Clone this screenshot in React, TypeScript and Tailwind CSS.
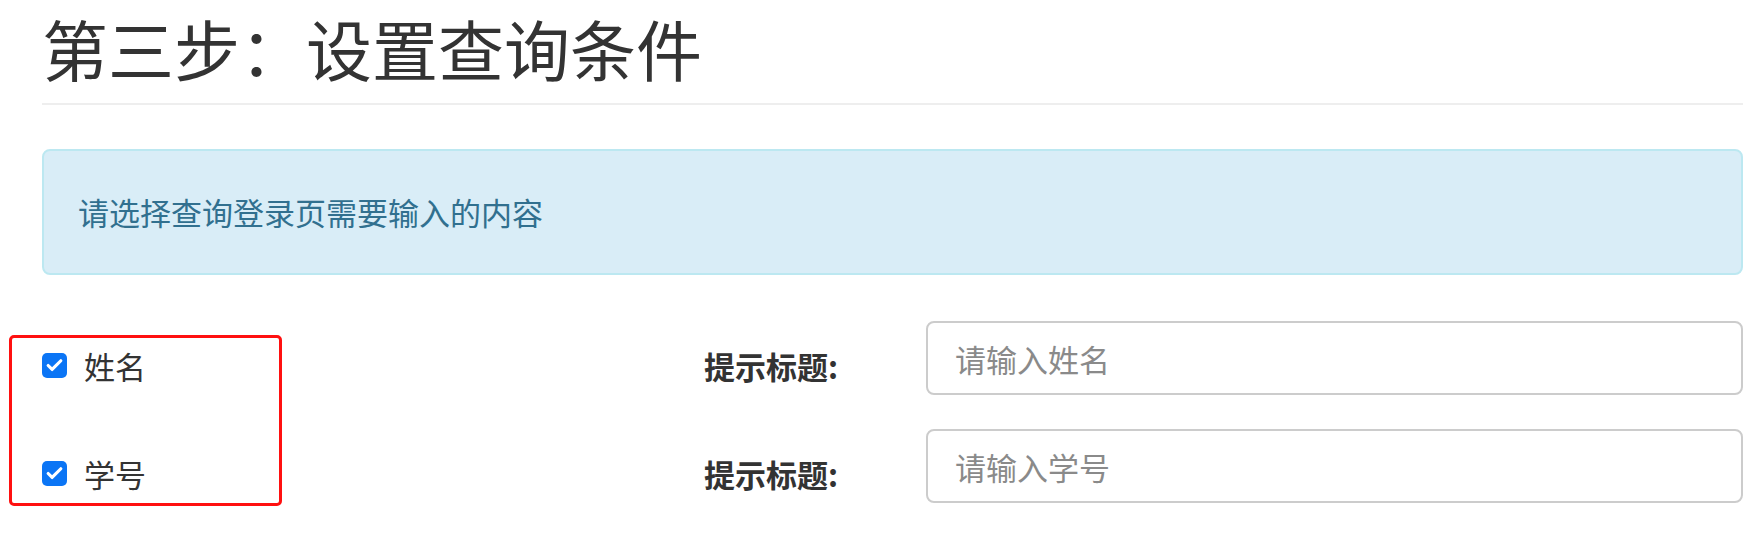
import { Check } from 'lucide-react'

const fields = [
  { key: 'name', label: '姓名', placeholder: '请输入姓名' },
  { key: 'sid', label: '学号', placeholder: '请输入学号' },
]

function CheckBox() {
  return (
    <span className="w-[25px] h-[25px] rounded-[5px] bg-[#0b75f5] flex items-center justify-center shrink-0">
      <Check className="w-[19px] h-[19px] text-white" strokeWidth={4} />
    </span>
  )
}

export default function App() {
  return (
    <div
      className="w-[1762px] h-[537px] bg-white pl-[42px] pr-[19px] text-[#333]"
      style={{ fontFamily: '"Noto Sans CJK SC", "Liberation Sans", sans-serif' }}
    >
      <div className="pt-[11px] pb-[20px] border-b-2 border-[#eeeeee]">
        <h2 className="text-[66px] leading-[72px] font-normal text-[#333]">
          第三步：设置查询条件
        </h2>
      </div>

      <div className="mt-[44px] h-[126px] rounded-[8px] border-2 border-[#bce8f1] bg-[#d9edf7] text-[#31708f] pl-[34px] flex items-center text-[31px]">
        请选择查询登录页需要输入的内容
      </div>

      <div className="relative mt-[46px]">
        {/* red annotation frame */}
        <div className="absolute left-[-33px] top-[14px] w-[273px] h-[171px] border-[3px] border-[#ff1010] rounded-[5px] pointer-events-none" />

        <div className="flex flex-col gap-[34px]">
          {fields.map((f) => (
            <div key={f.key} className="flex items-center h-[74px]">
              <label className="w-[662px] flex items-center gap-[17px] pt-[14px]">
                <CheckBox />
                <span className="text-[31px] leading-none text-[#333]">{f.label}</span>
              </label>
              <div className="w-[222px] pt-[14px] text-[31px] font-bold leading-none text-[#333]">
                提示标题:
              </div>
              <input
                className="flex-1 h-[74px] rounded-[8px] border-2 border-[#cccccc] bg-white px-[27px] text-[31px] outline-none placeholder:text-[#8a8a8a]"
                placeholder={f.placeholder}
              />
            </div>
          ))}
        </div>
      </div>
    </div>
  )
}
